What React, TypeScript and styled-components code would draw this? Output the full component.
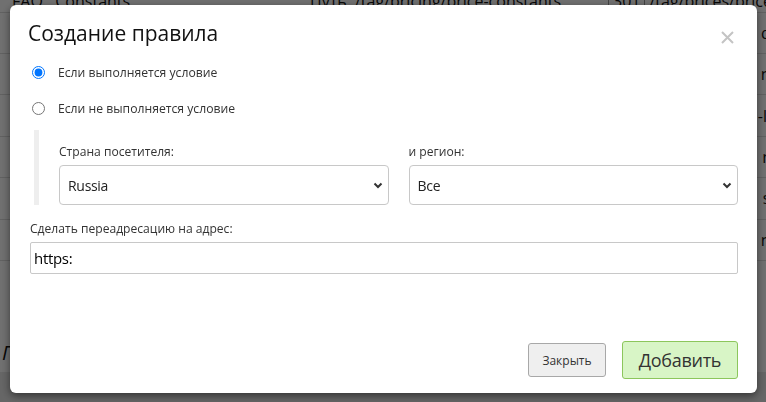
import React from "react";
import styled, { createGlobalStyle } from "styled-components";

const GlobalStyle = createGlobalStyle`
  html, body {
    margin: 0;
    padding: 0;
    width: 766px;
    height: 402px;
    overflow: hidden;
    background: #ffffff;
    font-family: "Open Sans", "Noto Sans", sans-serif;
  }
`;

// page behind the modal
const Page = styled.div`
  display: flex;
  flex-direction: column;
  width: 766px;
  height: 402px;
  overflow: hidden;
  color: #111;
  font-size: 16px;
`;

const TopRow = styled.div`
  display: grid;
  grid-template-columns: 298px 298px 1fr;
  height: 21px;
  margin-top: -9px;
  border-bottom: 1px solid #ddd;
  padding-left: 12px;
  line-height: 20px;
  white-space: nowrap;
`;

const Badge = styled.span`
  border: 1px solid #999;
  padding: 0 4px;
  margin-right: 4px;
`;

const ListRow = styled.div`
  display: flex;
  justify-content: flex-end;
  align-items: center;
  height: 41px;
  border-bottom: 1px solid #ddd;
  white-space: nowrap;
  margin-right: -10px;
`;

const SectionTitle = styled.div`
  margin-top: 78px;
  padding-left: 2px;
  font-size: 20px;
  font-style: italic;
  height: 30px;
`;

const HeadRow = styled.div`
  display: grid;
  grid-template-columns: 358px 83px 195px 1fr;
  padding-left: 12px;
  margin-top: 4px;
  background: #e8e8e8;
  height: 30px;
  font-size: 14px;
`;

const Overlay = styled.div`
  position: fixed;
  inset: 0;
  background: rgba(0, 0, 0, 0.56);
  display: flex;
  align-items: flex-start;
  padding: 5px 0 0 10px;
`;

const Dialog = styled.div`
  width: 747px;
  height: 388px;
  box-sizing: border-box;
  background: #fff;
  border-radius: 6px;
  box-shadow: 0 3px 9px rgba(0, 0, 0, 0.5);
  display: flex;
  flex-direction: column;
  padding: 0 19px 0 20px;
  color: #222;
`;

const Header = styled.div`
  display: flex;
  justify-content: space-between;
  align-items: flex-start;
  height: 49px;
  box-sizing: border-box;
  padding-top: 13px;
`;

const Title = styled.h4`
  margin: 0 0 0 -2px;
  font-size: 21px;
  line-height: 30px;
  font-weight: 400;
  color: #111;
`;

const Close = styled.button`
  border: 0;
  background: none;
  padding: 0;
  margin: 13px 4px 0 0;
  display: flex;
  cursor: pointer;
`;

const RadioRow = styled.label`
  display: flex;
  align-items: center;
  gap: 13px;
  height: 36px;
  font-size: 12.2px;
  color: #333;
  padding-left: 2px;

  input {
    margin: 0;
    width: 13px;
    height: 13px;
  }
`;

const Condition = styled.div`
  display: grid;
  grid-template-columns: 1fr 1fr;
  gap: 20px;
  margin: 4px 0 0 4px;
  padding-left: 20px;
  border-left: 5px solid #eeeeee;
  height: 75px;
  align-items: end;
`;

const Field = styled.div`
  display: flex;
  flex-direction: column;
  gap: 4px;
`;

const Label = styled.label`
  font-size: 12.1px;
  color: #333;
  line-height: 18px;
`;

const SelectWrap = styled.div`
  position: relative;
  height: 40px;
`;

const Select = styled.select`
  appearance: none;
  width: 100%;
  height: 100%;
  box-sizing: border-box;
  border: 1px solid #c8c8c8;
  border-radius: 4px;
  background: #fff;
  padding: 0 30px 0 8px;
  font-family: inherit;
  font-size: 14px;
  letter-spacing: -0.3px;
  color: #222;
`;

const Chevron = styled.svg`
  position: absolute;
  right: 6px;
  top: 17px;
  pointer-events: none;
`;

const Redirect = styled.div`
  display: flex;
  flex-direction: column;
  gap: 4px;
  margin-top: 15px;
`;

const TextInput = styled.input`
  height: 32px;
  box-sizing: border-box;
  border: 1px solid #c8c8c8;
  border-radius: 2px;
  padding: 0 3px;
  font-family: inherit;
  font-size: 15px;
  letter-spacing: -0.3px;
  color: #000;
`;

const Footer = styled.div`
  margin-top: auto;
  display: flex;
  justify-content: flex-end;
  align-items: center;
  gap: 16px;
  height: 38px;
  margin-bottom: 14px;
`;

const Button = styled.button<{ $primary?: boolean }>`
  font-family: inherit;
  box-sizing: border-box;
  cursor: pointer;
  border-radius: 3px;
  color: #333;
  border: 1px solid ${(p) => (p.$primary ? "#8cc65c" : "#a8a8a8")};
  background: ${(p) => (p.$primary ? "#d8f5c6" : "#efefef")};
  height: ${(p) => (p.$primary ? "38px" : "34px")};
  width: ${(p) => (p.$primary ? "116px" : "78px")};
  font-size: ${(p) => (p.$primary ? "18px" : "12px")};
  letter-spacing: ${(p) => (p.$primary ? "-0.3px" : "0")};
  padding: 0;
`;

const rightTexts = ["d-", "nf", "-le", "ni", "st", "nf"];

export default function App() {
  return (
    <>
      <GlobalStyle />
      <Page>
        <TopRow>
          <span>FAQ&nbsp;&nbsp;&nbsp;Constants</span>
          <span>Путь: /tag/pricing/price-constants</span>
          <span>
            <Badge>301</Badge>/tag/prices/price-constants
          </span>
        </TopRow>
        {rightTexts.map((t, i) => (
          <ListRow key={i}>{t}</ListRow>
        ))}
        <SectionTitle>Г</SectionTitle>
        <HeadRow>
          <span>Х</span>
          <span>С</span>
          <span>В</span>
          <span>В</span>
        </HeadRow>
      </Page>
      <Overlay>
        <Dialog>
          <Header>
            <Title>Создание правила</Title>
            <Close aria-label="Закрыть">
              <svg width="13" height="13" viewBox="0 0 13 13">
                <path d="M1 1L12 12M12 1L1 12" stroke="#c4c4c4" strokeWidth="2" />
              </svg>
            </Close>
          </Header>
          <RadioRow>
            <input type="radio" name="cond" defaultChecked />
            Если выполняется условие
          </RadioRow>
          <RadioRow>
            <input type="radio" name="cond" />
            Если не выполняется условие
          </RadioRow>
          <Condition>
            <Field>
              <Label>Страна посетителя:</Label>
              <SelectWrap>
                <Select defaultValue="ru">
                  <option value="ru">Russia</option>
                </Select>
                <Chevron width="10" height="7" viewBox="0 0 10 7">
                  <path d="M1.5 1.5L5 5L8.5 1.5" stroke="#333" strokeWidth="2" fill="none" />
                </Chevron>
              </SelectWrap>
            </Field>
            <Field>
              <Label>и регион:</Label>
              <SelectWrap>
                <Select defaultValue="all">
                  <option value="all">Все</option>
                </Select>
                <Chevron width="10" height="7" viewBox="0 0 10 7">
                  <path d="M1.5 1.5L5 5L8.5 1.5" stroke="#333" strokeWidth="2" fill="none" />
                </Chevron>
              </SelectWrap>
            </Field>
          </Condition>
          <Redirect>
            <Label>Сделать переадресацию на адрес:</Label>
            <TextInput defaultValue="https:" />
          </Redirect>
          <Footer>
            <Button>Закрыть</Button>
            <Button $primary>Добавить</Button>
          </Footer>
        </Dialog>
      </Overlay>
    </>
  );
}
